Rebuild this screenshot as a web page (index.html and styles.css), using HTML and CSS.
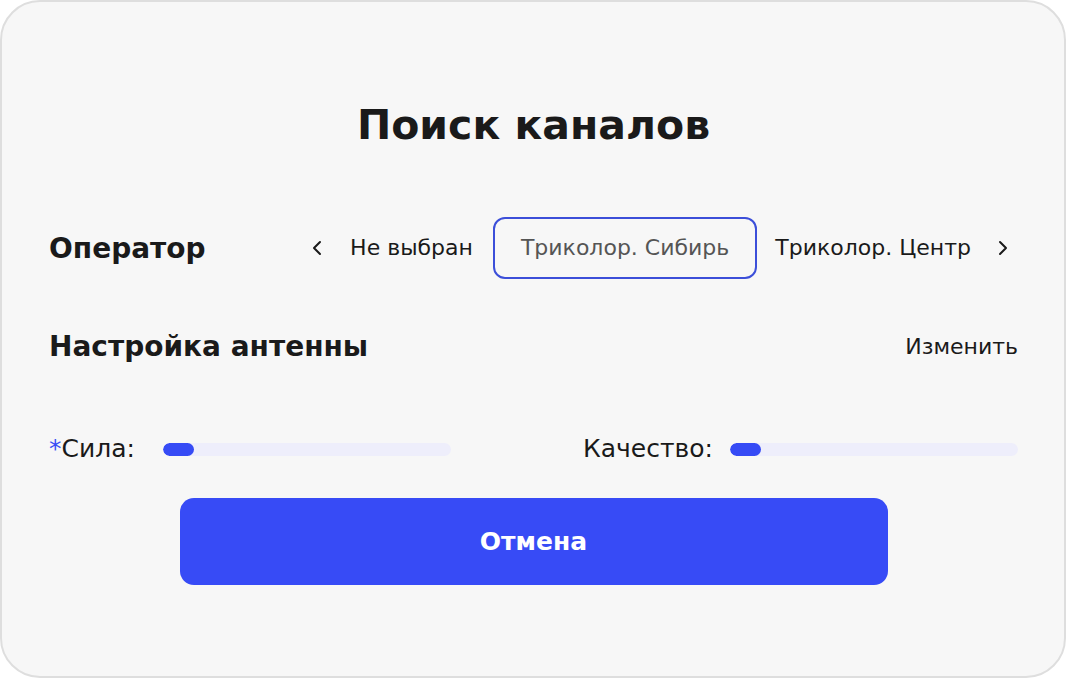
FILE: index.html
```html
<!DOCTYPE html>
<html lang="ru">
<head>
    <meta charset="UTF-8">
    <meta name="viewport" content="width=device-width, initial-scale=1.0">
    <title>Поиск каналов</title>
    <link rel="stylesheet" href="styles.css">
</head>
<body>
    <div class="card">
        <h1 class="title">Поиск каналов</h1>

        <div class="row operator-row">
            <div class="row-label">Оператор</div>
            <div class="carousel">
                <button class="arrow" type="button">
                    <svg width="10" height="16" viewBox="0 0 10 16"><polyline points="8,2 2,8 8,14" fill="none" stroke="#1a1a1a" stroke-width="2" stroke-linecap="round" stroke-linejoin="round"/></svg>
                </button>
                <span class="option">Не выбран</span>
                <span class="option selected">Триколор. Сибирь</span>
                <span class="option">Триколор. Центр</span>
                <button class="arrow" type="button">
                    <svg width="10" height="16" viewBox="0 0 10 16"><polyline points="2,2 8,8 2,14" fill="none" stroke="#1a1a1a" stroke-width="2" stroke-linecap="round" stroke-linejoin="round"/></svg>
                </button>
            </div>
        </div>

        <div class="row antenna-row">
            <div class="row-label">Настройка антенны</div>
            <a class="edit-link" href="#">Изменить</a>
        </div>

        <div class="signal-row">
            <div class="signal signal-strength">
                <span class="signal-label"><span class="star">*</span>Сила:</span>
                <div class="bar"><div class="bar-fill" style="width: 31px;"></div></div>
            </div>
            <div class="signal signal-quality">
                <span class="signal-label">Качество:</span>
                <div class="bar"><div class="bar-fill" style="width: 31px;"></div></div>
            </div>
        </div>

        <button class="cancel-button" type="button">Отмена</button>
    </div>
</body>
</html>
```

FILE: styles.css
```css
* {
    box-sizing: border-box;
}
body {
    margin: 0;
    background-color: #ffffff;
    font-family: "DejaVu Sans", sans-serif;
    color: #1a1a1a;
}
.card {
    width: 1066px;
    height: 678px;
    border: 2px solid #dedede;
    border-radius: 40px;
    background-color: #f7f7f7;
    padding: 98px 46px 0 47px;
    display: flex;
    flex-direction: column;
}
.title {
    margin: 0;
    text-align: center;
    font-size: 41px;
    line-height: 50px;
    font-weight: 700;
}
.row {
    display: flex;
    align-items: center;
    justify-content: space-between;
}
.row-label {
    font-size: 28px;
    font-weight: 700;
}
.operator-row {
    margin-top: 67px;
    height: 62px;
}
.carousel {
    display: flex;
    align-items: center;
    margin-right: 9px;
}
.arrow {
    background: none;
    border: none;
    padding: 0;
    width: 12px;
    height: 16px;
    display: flex;
    align-items: center;
    justify-content: center;
    cursor: pointer;
}
.arrow:first-child {
    margin-right: 27px;
}
.arrow:last-child {
    margin-left: 26px;
}
.option {
    font-size: 22px;
    line-height: 30px;
}
.option.selected {
    height: 62px;
    display: flex;
    align-items: center;
    padding: 0 26px;
    margin: 0 18px 0 20px;
    border: 2px solid #3c4fd9;
    border-radius: 12px;
    color: #555555;
}
.antenna-row {
    margin-top: 47px;
    height: 40px;
}
.edit-link {
    font-size: 22px;
    color: #1a1a1a;
    text-decoration: none;
}
.signal-row {
    margin-top: 68px;
    height: 30px;
    display: flex;
    align-items: center;
    justify-content: space-between;
}
.signal {
    display: flex;
    align-items: center;
}
.signal-label {
    font-size: 25px;
    line-height: 30px;
}
.star {
    color: #3a4ef5;
}
.signal-strength .signal-label {
    margin-right: 28px;
}
.signal-quality .signal-label {
    margin-right: 17px;
}
.bar {
    width: 288px;
    height: 13px;
    border-radius: 7px;
    background-color: #eeeefb;
    overflow: hidden;
}
.bar-fill {
    height: 100%;
    border-radius: 7px;
    background-color: #364bf5;
}
.cancel-button {
    margin: 34px auto 0;
    width: 708px;
    height: 87px;
    border: none;
    border-radius: 14px;
    background-color: #374bf6;
    color: #ffffff;
    font-family: inherit;
    font-size: 25px;
    font-weight: 700;
    cursor: pointer;
}
```
